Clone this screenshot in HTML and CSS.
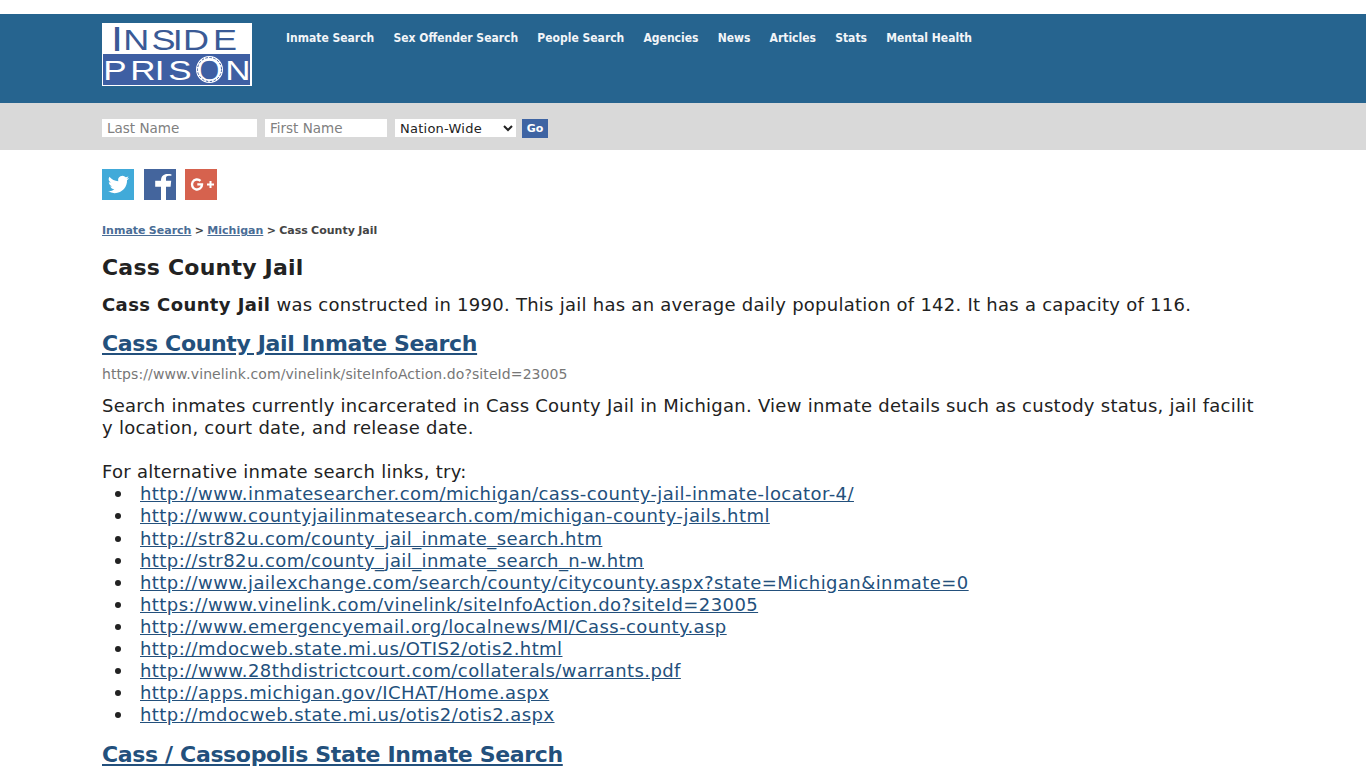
FILE: index.html
```html
<!DOCTYPE html>
<html>
<head>
<meta charset="utf-8"/>
<title>Cass County Jail - Inside Prison</title>
<link rel="stylesheet" href="styles.css">
</head>
<body>
<div class="Header">
    <div class="Wrap HeaderRow">
        <a class="Logo" href="#">
            <svg viewBox="0 0 150 63" width="150" height="63">
                <rect x="1" y="31" width="147" height="31" fill="#3e5fa3"/>
                <text class="LogoDark" transform="scale(1.2 1)" font-size="30"><tspan x="7.5" y="28" font-size="36">I</tspan><tspan x="17.8 41.2 58.9 67.6 92.6" y="27">NSIDE</tspan></text>
                <text class="LogoLight" transform="scale(1.25 1)" y="57" font-size="28" x="0.96 22.6 42.2 53.1">PRIS</text>
                <text class="LogoLight" x="93.8" y="59" font-size="35">O</text>
                <circle cx="107.5" cy="46.5" r="12" fill="none" stroke="#fff" stroke-width="3"/>
                <circle cx="107.5" cy="46.5" r="12" fill="none" stroke="#3e5fa3" stroke-width="1" stroke-dasharray="2.5 1.5"/>
                <text class="LogoLight" transform="scale(1.25 1)" x="98.6" y="57" font-size="28">N</text>
            </svg>
        </a>
        <ul class="Nav">
            <li><a href="#">Inmate Search</a></li>
            <li><a href="#">Sex Offender Search</a></li>
            <li><a href="#">People Search</a></li>
            <li><a href="#">Agencies</a></li>
            <li><a href="#">News</a></li>
            <li><a href="#">Articles</a></li>
            <li><a href="#">Stats</a></li>
            <li><a href="#">Mental Health</a></li>
        </ul>
    </div>
</div>

<div class="SearchBar">
    <form class="Wrap SearchRow">
        <input class="NameLast" type="text" placeholder="Last Name">
        <input class="NameFirst" type="text" placeholder="First Name">
        <select class="Region"><option>Nation-Wide</option></select>
        <input class="Go" type="button" value="Go">
    </form>
</div>

<div class="Wrap Content">
    <div class="Share">
        <a class="Icon Twitter" href="#"><svg viewBox="0 0 24 24" width="23" height="23"><path fill="#fff" d="M23 5.100c-.8.4-1.700.6-2.600.7.9-.6 1.600-1.400 2-2.500-.9.5-1.900.9-2.900 1.100A4.500 4.500 0 0 0 11.800 8.600 12.800 12.800 0 0 1 2.500 3.900a4.500 4.500 0 0 0 1.400 6c-.7 0-1.400-.2-2-.6 0 2.200 1.500 4.100 3.600 4.500-.7.200-1.400.2-2 .1.600 1.800 2.200 3.100 4.200 3.100A9 9 0 0 1 1 18.900 12.800 12.800 0 0 0 8 21c8.400 0 13.200-7.100 12.900-13.400.9-.7 1.600-1.500 2.100-2.500z"/></svg></a>
        <a class="Icon Facebook" href="#"><svg viewBox="0 0 32 31" width="32" height="31"><path fill="#fff" d="M22 31V17.800h4.600l.6-6H22V9.300c0-1.600.5-2.600 2.700-2.600h2.700V5.300c-.5-.1-2-.2-3.900-.2-4 0-6.500 2.300-6.500 6.500v.2h-5.800v6h5.800V31z"/></svg></a>
        <a class="Icon Google" href="#"><svg viewBox="0 0 32 31" width="32" height="31"><path fill="none" stroke="#fff" stroke-width="2.400" d="M15.500 11.900A5 5 0 1 0 17 15.400H12.300"/><path fill="#fff" d="M22 14.500h2.500V12h2v2.500H29v2h-2.500V19h-2v-2.500H22z"/></svg></a>
    </div>

    <div class="Crumbs"><a href="#">Inmate Search</a> &gt; <a href="#">Michigan</a> &gt; Cass County Jail</div>

    <h1>Cass County Jail</h1>
    <p class="Intro"><b>Cass County Jail</b> was constructed in 1990. This jail has an average daily population of 142. It has a capacity of 116.</p>

    <h2><a href="#">Cass County Jail Inmate Search</a></h2>
    <div class="SourceUrl">https://www.vinelink.com/vinelink/siteInfoAction.do?siteId=23005</div>
    <div class="Desc">Search inmates currently incarcerated in Cass County Jail in Michigan. View inmate details such as custody status, jail facility location, court date, and release date.<br><br>For alternative inmate search links, try:</div>
    <ul class="Links">
        <li><a href="#">http://www.inmatesearcher.com/michigan/cass-county-jail-inmate-locator-4/</a></li>
        <li><a href="#">http://www.countyjailinmatesearch.com/michigan-county-jails.html</a></li>
        <li><a href="#">http://str82u.com/county_jail_inmate_search.htm</a></li>
        <li><a href="#">http://str82u.com/county_jail_inmate_search_n-w.htm</a></li>
        <li><a href="#">http://www.jailexchange.com/search/county/citycounty.aspx?state=Michigan&amp;inmate=0</a></li>
        <li><a href="#">https://www.vinelink.com/vinelink/siteInfoAction.do?siteId=23005</a></li>
        <li><a href="#">http://www.emergencyemail.org/localnews/MI/Cass-county.asp</a></li>
        <li><a href="#">http://mdocweb.state.mi.us/OTIS2/otis2.html</a></li>
        <li><a href="#">http://www.28thdistrictcourt.com/collaterals/warrants.pdf</a></li>
        <li><a href="#">http://apps.michigan.gov/ICHAT/Home.aspx</a></li>
        <li><a href="#">http://mdocweb.state.mi.us/otis2/otis2.aspx</a></li>
    </ul>

    <h2 class="Next"><a href="#">Cass / Cassopolis State Inmate Search</a></h2>
</div>
</body>
</html>
```

FILE: styles.css
```css
html, body { height: 768px; overflow: hidden; }
body { margin: 0; background: #fff; color: #222; font-family: "DejaVu Sans", Verdana, sans-serif; font-size: 18px; letter-spacing: 0.26px; }
a { color: #23507c; }
.Wrap { margin-left: 102px; width: 1154px; }

.Header { margin-top: 14px; height: 89px; background: #26648f; }
.HeaderRow { display: flex; padding-top: 9px; }
.Logo { display: block; width: 150px; height: 63px; background: #fff; font-family: "Liberation Sans", sans-serif; letter-spacing: 0; }
.Logo svg { display: block; }
.LogoDark { fill: #3a5a96; }
.LogoLight { fill: #fff; }
.Nav { display: flex; gap: 19.2px; margin: 0; padding: 8px 0 0 34px; list-style: none; font-family: "DejaVu Sans Condensed", "DejaVu Sans", sans-serif; font-size: 12px; font-weight: bold; letter-spacing: 0; }
.Nav a { color: #f2f5f8; text-decoration: none; }

.SearchBar { height: 47px; background: #d9d9d9; }
.SearchRow { display: flex; align-items: flex-start; padding-top: 16px; }
.SearchRow input, .SearchRow select { box-sizing: border-box; height: 18px; border: 0; padding: 0 5px; background: #fff; font-family: "DejaVu Sans", sans-serif; font-size: 13.5px; letter-spacing: 0; }
.SearchRow input::placeholder { color: #808080; }
.NameLast { width: 155px; margin-right: 8px; }
.NameFirst { width: 122px; margin-right: 8px; }
.SearchRow .Region { width: 121px; margin-right: 6px; padding: 0 0 0 1px; color: #222; font-size: 13px; letter-spacing: 0.25px; }
.SearchRow .Go { width: 26px; height: 19px; padding: 0; background: #3e64a3; color: #fff; font-size: 11px; font-weight: bold; }

.Share { display: flex; padding-top: 19px; height: 31px; }
.Icon { display: flex; align-items: center; justify-content: center; width: 32px; height: 31px; overflow: hidden; }
.Twitter { background: #41aad9; margin-right: 10px; }
.Facebook { background: #44659d; margin-right: 9px; }
.Google { background: #d6624e; }

.Crumbs { margin-top: 24px; font-size: 11px; font-weight: bold; color: #444; line-height: 14px; letter-spacing: 0; word-spacing: -0.5px; }
.Crumbs a { color: #4a6d96; }

h1 { margin: 16px 0 0; font-size: 22px; line-height: 28px; color: #222; letter-spacing: 0.22px; }
.Intro { margin: 12px 0 0; line-height: 22px; }
.Intro b { letter-spacing: 0.4px; }
h2 { margin: 14px 0 0; font-size: 22px; line-height: 28px; letter-spacing: -0.35px; }
.SourceUrl { margin-top: 7px; font-size: 14px; line-height: 18px; color: #777; letter-spacing: 0.09px; }
.Desc { margin-top: 12px; line-height: 22px; word-break: break-all; }
.Links { margin: 0.4px 0 0; padding-left: 38px; line-height: 22.1px; list-style: none; letter-spacing: 0.42px; }
.Links li::before { content: ""; display: inline-block; width: 6px; height: 6px; margin: 0 19px 3px -25px; border-radius: 50%; background: #222; }
.Next { margin-top: 14.6px; }
```
